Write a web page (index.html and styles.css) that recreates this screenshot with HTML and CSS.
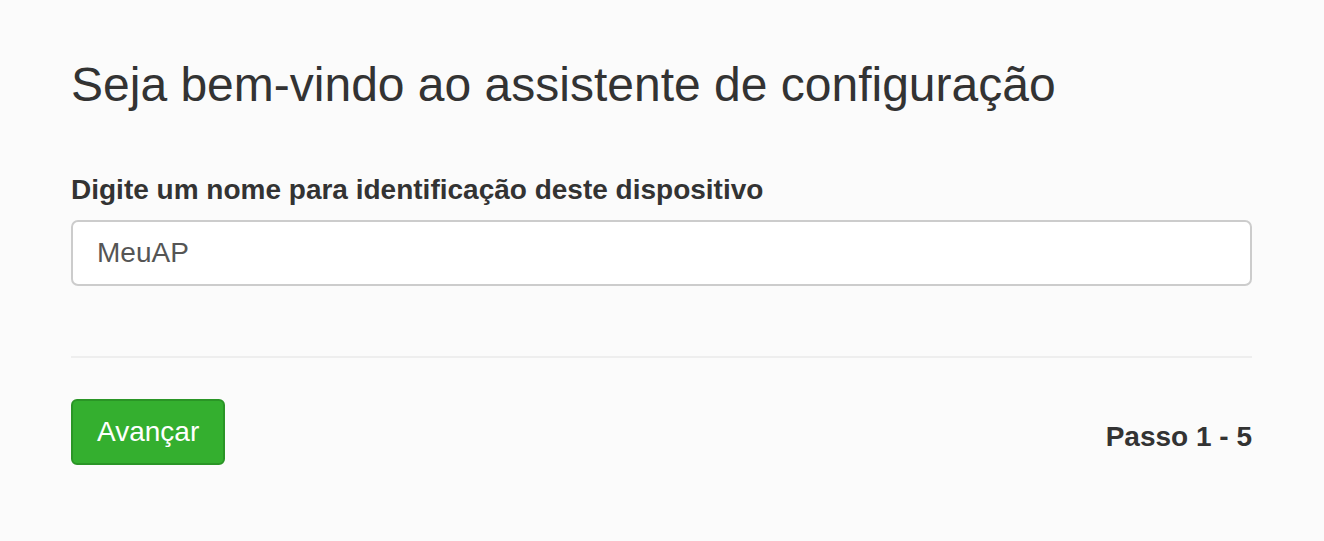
FILE: index.html
```html
<!DOCTYPE html>
<html lang="pt-BR">
<head>
<meta charset="utf-8">
<title>Assistente de configuração</title>
<link rel="stylesheet" href="styles.css">
</head>
<body>
<main class="wizard">
  <h1 class="title">Seja bem-vindo ao assistente de configuração</h1>
  <form class="step">
    <label class="label" for="devname">Digite um nome para identificação deste dispositivo</label>
    <input class="input" id="devname" type="text" value="MeuAP">
    <hr class="divider">
    <div class="footer">
      <button class="btn-next" type="button">Avançar</button>
      <span class="step-count">Passo 1 - 5</span>
    </div>
  </form>
</main>
</body>
</html>
```

FILE: styles.css
```css
html, body {
  margin: 0;
  padding: 0;
}
body {
  background: #fbfbfb;
  font-family: "Liberation Sans", Arial, sans-serif;
  color: #333;
}
.wizard {
  width: 1181px;
  margin-left: 71px;
  padding-top: 59px;
}
.title {
  margin: 0;
  font-size: 48px;
  line-height: 1.1;
  font-weight: 400;
  color: #333;
}
.step {
  display: flex;
  flex-direction: column;
  margin: 0;
}
.label {
  margin-top: 58px;
  font-size: 28px;
  font-weight: 700;
  line-height: 1.4;
  color: #333;
}
.input {
  box-sizing: border-box;
  margin-top: 11px;
  width: 100%;
  height: 66px;
  padding: 0 24px;
  border: 2px solid #cccccc;
  border-radius: 7px;
  background: #fff;
  font-family: "Liberation Sans", Arial, sans-serif;
  font-size: 28px;
  line-height: 62px;
  color: #555;
  outline: none;
}
.divider {
  margin: 70px 0 0;
  border: 0;
  border-top: 2px solid #eeeeee;
  height: 0;
}
.footer {
  margin-top: 41px;
  display: flex;
  justify-content: space-between;
  align-items: flex-start;
}
.btn-next {
  box-sizing: border-box;
  height: 66px;
  padding: 0 24px;
  border: 2px solid #2a9526;
  border-radius: 6px;
  background: #34af2f;
  color: #fff;
  font-family: "Liberation Sans", Arial, sans-serif;
  font-size: 28px;
  line-height: 62px;
}
.step-count {
  margin-top: 21px;
  font-size: 28px;
  font-weight: 700;
  line-height: 1.2;
  color: #333;
}
```
